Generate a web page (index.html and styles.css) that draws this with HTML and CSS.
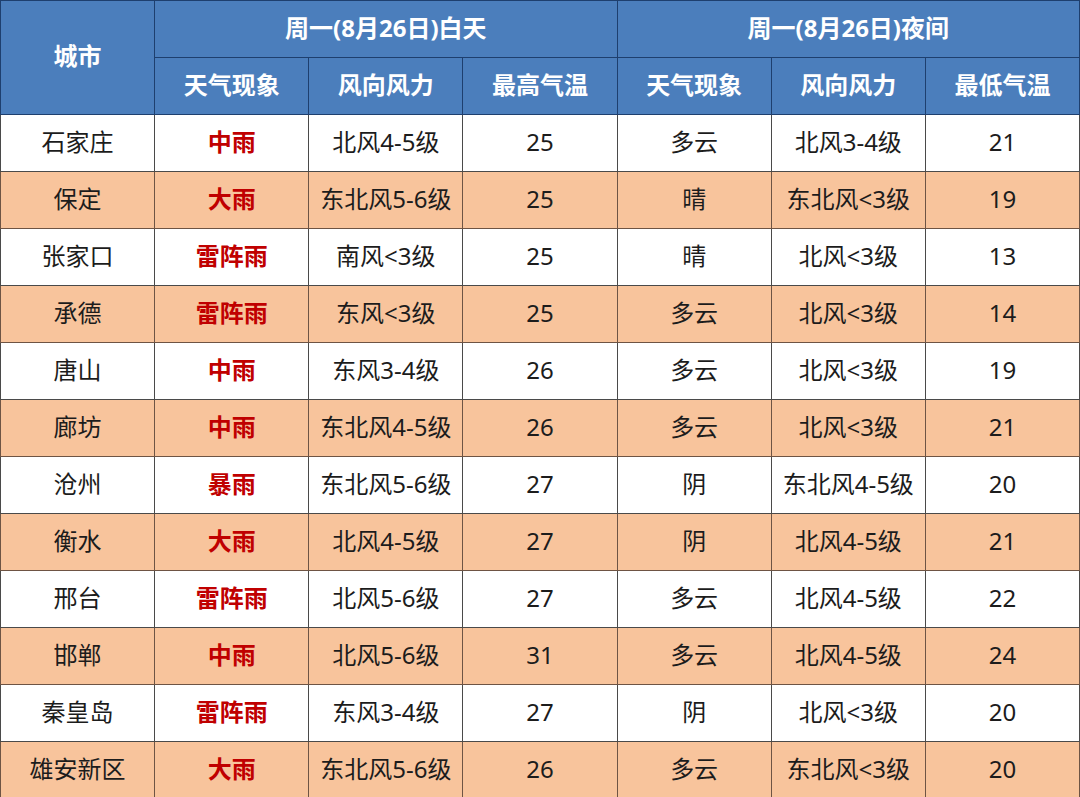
FILE: index.html
```html
<!DOCTYPE html>
<html lang="zh-CN">
<head>
<meta charset="utf-8">
<link rel="stylesheet" href="styles.css">
</head>
<body>
<table class="wx">
  <colgroup>
    <col><col><col><col><col><col><col>
  </colgroup>
  <thead>
    <tr>
      <th rowspan="2" class="city-h">城市</th>
      <th colspan="3">周一(8月26日)白天</th>
      <th colspan="3">周一(8月26日)夜间</th>
    </tr>
    <tr>
      <th>天气现象</th><th>风向风力</th><th>最高气温</th>
      <th>天气现象</th><th>风向风力</th><th>最低气温</th>
    </tr>
  </thead>
  <tbody>
    <tr><td>石家庄</td><td class="rain">中雨</td><td>北风4-5级</td><td>25</td><td>多云</td><td>北风3-4级</td><td>21</td></tr>
    <tr class="alt"><td>保定</td><td class="rain">大雨</td><td>东北风5-6级</td><td>25</td><td>晴</td><td>东北风&lt;3级</td><td>19</td></tr>
    <tr><td>张家口</td><td class="rain">雷阵雨</td><td>南风&lt;3级</td><td>25</td><td>晴</td><td>北风&lt;3级</td><td>13</td></tr>
    <tr class="alt"><td>承德</td><td class="rain">雷阵雨</td><td>东风&lt;3级</td><td>25</td><td>多云</td><td>北风&lt;3级</td><td>14</td></tr>
    <tr><td>唐山</td><td class="rain">中雨</td><td>东风3-4级</td><td>26</td><td>多云</td><td>北风&lt;3级</td><td>19</td></tr>
    <tr class="alt"><td>廊坊</td><td class="rain">中雨</td><td>东北风4-5级</td><td>26</td><td>多云</td><td>北风&lt;3级</td><td>21</td></tr>
    <tr><td>沧州</td><td class="rain">暴雨</td><td>东北风5-6级</td><td>27</td><td>阴</td><td>东北风4-5级</td><td>20</td></tr>
    <tr class="alt"><td>衡水</td><td class="rain">大雨</td><td>北风4-5级</td><td>27</td><td>阴</td><td>北风4-5级</td><td>21</td></tr>
    <tr><td>邢台</td><td class="rain">雷阵雨</td><td>北风5-6级</td><td>27</td><td>多云</td><td>北风4-5级</td><td>22</td></tr>
    <tr class="alt"><td>邯郸</td><td class="rain">中雨</td><td>北风5-6级</td><td>31</td><td>多云</td><td>北风4-5级</td><td>24</td></tr>
    <tr><td>秦皇岛</td><td class="rain">雷阵雨</td><td>东风3-4级</td><td>27</td><td>阴</td><td>北风&lt;3级</td><td>20</td></tr>
    <tr class="alt"><td>雄安新区</td><td class="rain">大雨</td><td>东北风5-6级</td><td>26</td><td>多云</td><td>东北风&lt;3级</td><td>20</td></tr>
  </tbody>
</table>
</body>
</html>
```

FILE: styles.css
```css
html, body {
  margin: 0;
  padding: 0;
  background: #ffffff;
}
body {
  width: 1080px;
  height: 797px;
  overflow: hidden;
  font-family: "Noto Sans", "Noto Sans CJK SC", sans-serif;
}
.wx {
  width: 1080px;
  border-collapse: collapse;
  table-layout: fixed;
}
.wx th, .wx td {
  text-align: center;
  vertical-align: middle;
  padding: 0 0 3px 0;
  font-size: 24px;
  line-height: 1;
  box-sizing: border-box;
}
.wx thead tr {
  height: 57px;
}
.wx tbody tr {
  height: 57px;
}
.wx th {
  background: #4b7ebc;
  color: #ffffff;
  font-weight: 700;
  border: 1px solid #1e3f6e;
}
.wx td {
  background: #ffffff;
  color: #1c1c1c;
  font-weight: 400;
  border: 1px solid #4a4a4a;
}
.wx tr.alt td {
  background: #f8c49c;
  border-color: #6e5444;
}
.wx td.rain {
  color: #c00000;
  font-weight: 700;
}
```
